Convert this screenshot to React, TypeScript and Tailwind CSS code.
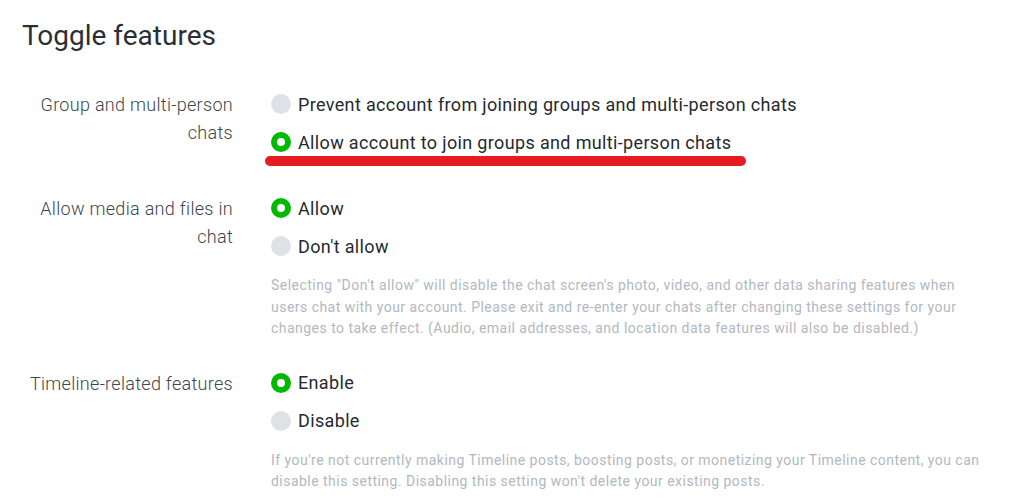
const font = { fontFamily: 'Roboto, "Noto Sans", sans-serif' }

interface Option {
  label: string
  checked: boolean
  mark?: boolean
}

interface Section {
  label: string
  options: Option[]
  help?: string
}

const sections: Section[] = [
  {
    label: 'Group and multi-person chats',
    options: [
      { label: 'Prevent account from joining groups and multi-person chats', checked: false },
      { label: 'Allow account to join groups and multi-person chats', checked: true, mark: true },
    ],
  },
  {
    label: 'Allow media and files in chat',
    options: [
      { label: 'Allow', checked: true },
      { label: "Don't allow", checked: false },
    ],
    help: 'Selecting "Don\'t allow" will disable the chat screen\'s photo, video, and other data sharing features when users chat with your account. Please exit and re-enter your chats after changing these settings for your changes to take effect. (Audio, email addresses, and location data features will also be disabled.)',
  },
  {
    label: 'Timeline-related features',
    options: [
      { label: 'Enable', checked: true },
      { label: 'Disable', checked: false },
    ],
    help: "If you're not currently making Timeline posts, boosting posts, or monetizing your Timeline content, you can disable this setting. Disabling this setting won't delete your existing posts.",
  },
]

function Radio({ checked }: { checked: boolean }) {
  return checked ? (
    <span className="w-5 h-5 shrink-0 rounded-full border-[6px] border-[#00b900] bg-white" />
  ) : (
    <span className="w-5 h-5 shrink-0 rounded-full bg-[#dfe1e6]" />
  )
}

export default function App() {
  return (
    <div className="w-[1030px] h-[498px] overflow-hidden bg-white" style={font}>
      <h1 className="pt-[19px] pl-[22px] text-[28px] leading-[34px] text-[#2b2f36]">Toggle features</h1>

      <div className="mt-[32px] flex flex-col">
        {sections.map((section, i) => (
          <div key={section.label} className={`flex gap-[38px] pl-[22px] ${i === 1 ? 'mt-[28px]' : ''} ${i === 2 ? 'mt-[24px]' : ''}`}>
            <div className="w-[211px] shrink-0 pt-[6px] text-right text-[18px] font-light leading-[28px] tracking-[0.3px] text-[#40454d]">
              {section.label}
            </div>
            <div className="w-[712px]">
              {section.options.map((opt) => (
                <div key={opt.label} className="relative flex h-[38px] items-center gap-[7px]">
                  <Radio checked={opt.checked} />
                  <span className="text-[18px] tracking-[0.35px] text-[#262a30]">{opt.label}</span>
                  {opt.mark && (
                    <span className="absolute left-[-6px] top-[33px] h-[10px] w-[481px] rounded-full bg-[#e61c22]" />
                  )}
                </div>
              ))}
              {section.help && (
                <p className="mt-[10px] text-[14px] leading-[21.5px] tracking-[0.47px] text-[#b3b8c0]">{section.help}</p>
              )}
            </div>
          </div>
        ))}
      </div>
    </div>
  )
}
